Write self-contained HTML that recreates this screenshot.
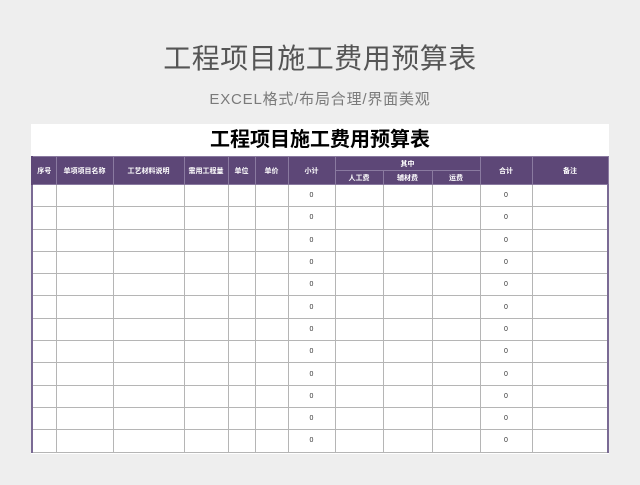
<!DOCTYPE html>
<html><head><meta charset="utf-8"><style>
*{margin:0;padding:0;box-sizing:border-box}
body{width:640px;height:485px;background:#eeeeee;position:relative;overflow:hidden;font-family:"Liberation Sans","Noto Sans CJK SC",sans-serif}
.t{position:absolute;left:0;width:640px;text-align:center}
.sheet{position:absolute;left:31px;top:124px;width:578px;height:330px;background:#fff}
table{position:absolute;left:31px;top:156px;border-collapse:collapse;table-layout:fixed}
td{border:1px solid #b5b5b5;height:22.3px;font-size:7px;text-align:center;color:#333;padding:0}
th{background:#5d4777;color:#fff;font-size:7px;font-weight:bold;border:1px solid #8a7aa0;padding:0}
</style></head><body>
<div class="t" style="top:37px;font-size:28px;color:#555;letter-spacing:0.5px">工程项目施工费用预算表</div>
<div class="t" style="top:88px;font-size:15px;color:#7a7a7a;letter-spacing:0.8px">EXCEL格式/布局合理/界面美观</div>
<div class="sheet"></div>
<div class="t" style="top:123px;font-size:20px;font-weight:bold;color:#000">工程项目施工费用预算表</div>
<table>
<colgroup><col style="width:24px"><col style="width:57px"><col style="width:71px"><col style="width:44px"><col style="width:27px"><col style="width:33px"><col style="width:47px"><col style="width:48px"><col style="width:49px"><col style="width:48px"><col style="width:52px"><col style="width:76px"></colgroup>
<tr style="height:14px"><th rowspan="2" style="border-left:2px solid #5d4777">序号</th><th rowspan="2">单项项目名称</th><th rowspan="2">工艺材料说明</th><th rowspan="2">需用工程量</th><th rowspan="2">单位</th><th rowspan="2">单价</th><th rowspan="2">小计</th><th colspan="3">其中</th><th rowspan="2">合计</th><th rowspan="2">备注</th></tr>
<tr style="height:14px"><th>人工费</th><th>辅材费</th><th>运费</th></tr>
<tr><td style="border-left:2px solid #7a6a94"></td><td></td><td></td><td></td><td></td><td></td><td>0</td><td></td><td></td><td></td><td>0</td><td style="border-right:2px solid #7a6a94"></td></tr>
<tr><td style="border-left:2px solid #7a6a94"></td><td></td><td></td><td></td><td></td><td></td><td>0</td><td></td><td></td><td></td><td>0</td><td style="border-right:2px solid #7a6a94"></td></tr>
<tr><td style="border-left:2px solid #7a6a94"></td><td></td><td></td><td></td><td></td><td></td><td>0</td><td></td><td></td><td></td><td>0</td><td style="border-right:2px solid #7a6a94"></td></tr>
<tr><td style="border-left:2px solid #7a6a94"></td><td></td><td></td><td></td><td></td><td></td><td>0</td><td></td><td></td><td></td><td>0</td><td style="border-right:2px solid #7a6a94"></td></tr>
<tr><td style="border-left:2px solid #7a6a94"></td><td></td><td></td><td></td><td></td><td></td><td>0</td><td></td><td></td><td></td><td>0</td><td style="border-right:2px solid #7a6a94"></td></tr>
<tr><td style="border-left:2px solid #7a6a94"></td><td></td><td></td><td></td><td></td><td></td><td>0</td><td></td><td></td><td></td><td>0</td><td style="border-right:2px solid #7a6a94"></td></tr>
<tr><td style="border-left:2px solid #7a6a94"></td><td></td><td></td><td></td><td></td><td></td><td>0</td><td></td><td></td><td></td><td>0</td><td style="border-right:2px solid #7a6a94"></td></tr>
<tr><td style="border-left:2px solid #7a6a94"></td><td></td><td></td><td></td><td></td><td></td><td>0</td><td></td><td></td><td></td><td>0</td><td style="border-right:2px solid #7a6a94"></td></tr>
<tr><td style="border-left:2px solid #7a6a94"></td><td></td><td></td><td></td><td></td><td></td><td>0</td><td></td><td></td><td></td><td>0</td><td style="border-right:2px solid #7a6a94"></td></tr>
<tr><td style="border-left:2px solid #7a6a94"></td><td></td><td></td><td></td><td></td><td></td><td>0</td><td></td><td></td><td></td><td>0</td><td style="border-right:2px solid #7a6a94"></td></tr>
<tr><td style="border-left:2px solid #7a6a94"></td><td></td><td></td><td></td><td></td><td></td><td>0</td><td></td><td></td><td></td><td>0</td><td style="border-right:2px solid #7a6a94"></td></tr>
<tr><td style="border-left:2px solid #7a6a94"></td><td></td><td></td><td></td><td></td><td></td><td>0</td><td></td><td></td><td></td><td>0</td><td style="border-right:2px solid #7a6a94"></td></tr>
</table>
</body></html>
